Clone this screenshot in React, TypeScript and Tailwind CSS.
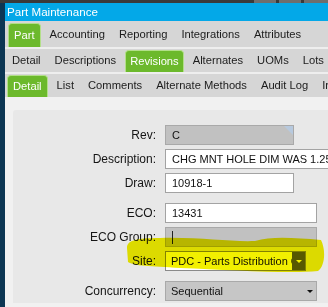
import React from "react";

const font = "font-['Liberation_Sans',Arial,sans-serif]";

const Tab = ({ label, active, h }: { label: string; active?: boolean; h: string }) =>
  active ? (
    <div
      className={`${h} mx-[2px] px-[4px] flex items-center rounded-t-[4px] bg-[#6cb92c] border border-b-0 border-[#b3df8a] text-white whitespace-nowrap`}
    >
      {label}
    </div>
  ) : (
    <div className="px-[7px] flex items-center h-full text-[#1c1c1c] whitespace-nowrap">{label}</div>
  );

const Field = ({
  value,
  w,
  gray,
  cursor,
  corner,
}: {
  value?: string;
  w: string;
  gray?: boolean;
  cursor?: boolean;
  corner?: boolean;
}) => (
  <div
    className={`${w} h-[20px] relative flex items-center pl-[6px] border whitespace-nowrap overflow-hidden text-[11px] ${
      gray ? "bg-[#c1c1c1] border-[#a9a9a9]" : "bg-white border-[#a3a3a3]"
    }`}
  >
    {cursor && <span className="w-px h-[13px] bg-[#222]" />}
    {value}
    {corner && (
      <div className="absolute top-0 right-0 w-0 h-0 border-t-[9px] border-l-[9px] border-t-[#b7c9de] border-l-transparent" />
    )}
  </div>
);

const Select = ({ value, w, dark }: { value: string; w: string; dark?: boolean }) => (
  <div
    className={`${w} h-[20px] flex items-center border text-[11px] ${
      dark ? "bg-white border-[#8a8a8a]" : "bg-[#c6c6c6] border-[#a9a9a9]"
    }`}
  >
    <span className="flex-1 pl-[5px] whitespace-nowrap overflow-hidden">{value}</span>
    <div className={`w-[13px] h-full shrink-0 flex items-center justify-center ${dark ? "bg-[#5c5c5c]" : ""}`}>
      <div
        className={`w-0 h-0 border-l-[3px] border-r-[3px] border-t-[3px] border-l-transparent border-r-transparent ${
          dark ? "border-t-white" : "border-t-[#111]"
        }`}
      />
    </div>
  </div>
);

const Row = ({ label, children }: { label: string; children: React.ReactNode }) => (
  <div className="flex items-center">
    <div className="w-[144px] shrink-0 text-right pr-px text-[#151515] whitespace-nowrap">{label}</div>
    <div className="ml-[8px] shrink-0">{children}</div>
  </div>
);

export default function App() {
  return (
    <div className={`${font} relative w-[328px] h-[307px] overflow-hidden bg-[#0c3653]`}>
      <div className="h-[3px] bg-[#3a3a3a] flex justify-end gap-[3px]">
        <div className="w-[22px] bg-[#6e6e6e]" />
        <div className="w-[22px] bg-[#6e6e6e]" />
        <div className="w-[24px] bg-[#6e6e6e]" />
      </div>
      <div className="ml-[5px] flex flex-col h-[304px]">
        <div className="h-[18px] bg-[#03a8e8] text-white text-[11.6px] pl-[2px] flex items-center">
          Part Maintenance
        </div>
        <div className="h-[26px] bg-[#d6d6d6] flex items-end pl-[1px] text-[11.2px]">
          <Tab label="Part" active h="h-[24px] px-[5px]" />
          <Tab label="Accounting" h="" />
          <Tab label="Reporting" h="" />
          <Tab label="Integrations" h="" />
          <Tab label="Attributes" h="" />
        </div>
        <div className="h-[2px] bg-[#eeeeee]" />
        <div className="h-[23px] bg-[#d6d6d6] flex items-end text-[11.2px]">
          <Tab label="Detail" h="" />
          <Tab label="Descriptions" h="" />
          <Tab label="Revisions" active h="h-[22px]" />
          <Tab label="Alternates" h="" />
          <Tab label="UOMs" h="" />
          <Tab label="Lots" h="" />
        </div>
        <div className="h-[2px] bg-[#eeeeee]" />
        <div className="h-[23px] bg-[#d6d6d6] flex items-end text-[11.2px]">
          <Tab label="Detail" active h="h-[22px] px-[5px]" />
          <Tab label="List" h="" />
          <Tab label="Comments" h="" />
          <Tab label="Alternate Methods" h="" />
          <Tab label="Audit Log" h="" />
          <Tab label="Integrations" h="" />
        </div>
        <div className="flex-1 bg-[#f1f1f1] pt-[13px] pl-[8px] overflow-hidden">
          <div className="h-[193px] bg-[#e8e8e8] rounded-tl-[3px] pt-[15px] flex flex-col gap-[4px] text-[12px] text-[#111]">
            <Row label="Rev:">
              <Field value="C" w="w-[129px]" gray corner />
            </Row>
            <Row label="Description:">
              <Field value="CHG MNT HOLE DIM WAS 1.250" w="w-[180px]" />
            </Row>
            <Row label="Draw:">
              <Field value="10918-1" w="w-[129px]" />
            </Row>
            <div className="h-[2px]" />
            <Row label="ECO:">
              <Field value="13431" w="w-[152px]" />
            </Row>
            <Row label="ECO Group:">
              <Field w="w-[152px]" gray cursor />
            </Row>
            <Row label="Site:">
              <Select value="PDC - Parts Distribution Center" w="w-[141px]" dark />
            </Row>
            <div className="h-[2px]" />
            <Row label="Concurrency:">
              <Select value="Sequential" w="w-[152px]" />
            </Row>
          </div>
        </div>
      </div>
      <svg className="absolute left-0 top-0 mix-blend-multiply pointer-events-none" width="328" height="307">
        <path
          d="M127,248 C127,241 134,238 160,238 C200,237 230,242 255,241 C272,236 295,238 321,240 C326,250 325,266 318,271 C290,274 230,270 180,268 C150,266 134,266 128,262 Z"
          fill="#f2f000"
        />
      </svg>
    </div>
  );
}
